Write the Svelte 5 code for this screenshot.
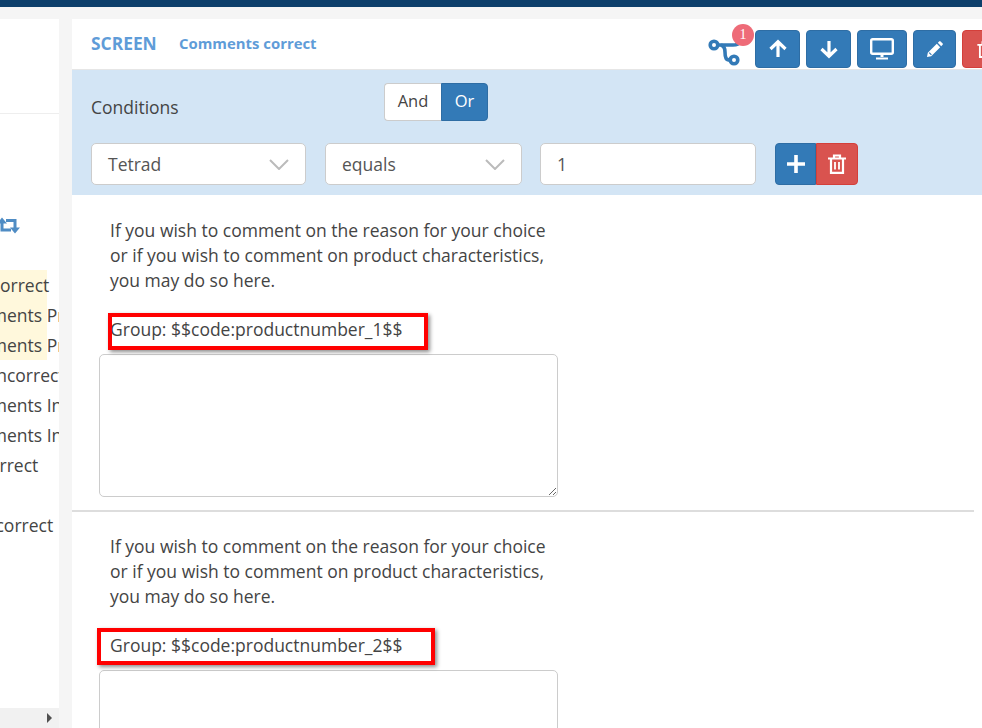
<script>
  const rows = [
    { text: 'Comments correct', shift: -102 },
    { text: 'Comments Product', shift: -47 },
    { text: 'Comments Product', shift: -47 },
    { text: 'Is incorrect', shift: -26 },
    { text: 'Comments Incorrect', shift: -47 },
    { text: 'Comments Incorrect', shift: -47 },
    { text: 'Correct', shift: -22 },
    { text: '', shift: 0 },
    { text: 'Not correct', shift: -39 }
  ];
  const questions = [
    { group: 'Group: $$code:productnumber_1$$', boxed: 'box_one' },
    { group: 'Group: $$code:productnumber_2$$', boxed: 'box_two' }
  ];
</script>

<div class="topbar"></div>
<div class="page">
  <aside class="tree">
    <div class="tree_head"></div>
    <div class="tree_tool">
      <svg width="21" height="18" viewBox="0 0 21 18">
        <path d="M2 4V13H11M6 3.500H15V12" fill="none" stroke="#4f8cc4" stroke-width="3"/>
        <path d="M10 10.500h10l-5 6zM-3 6.500h10l-5-6z" fill="#4f8cc4"/>
      </svg>
    </div>
    <div class="tree_list">
      <div class="tree_mark"></div>
      {#each rows as row}
        <div class="tree_row" style="margin-left: {row.shift}px">{row.text}</div>
      {/each}
    </div>
    <div class="tree_scroll">
      <span class="tree_arrow"></span>
    </div>
  </aside>

  <main class="main">
    <header class="head">
      <span class="head_kind">SCREEN</span>
      <span class="head_name">Comments correct</span>
      <div class="head_tools">
        <div class="flow">
          <svg width="36" height="30" viewBox="0 0 36 30" fill="none" stroke="#337ab7" stroke-width="3.600">
            <circle cx="7" cy="8" r="3.800"/>
            <circle cx="27" cy="23" r="3.800"/>
            <path d="M10.500 8H26c4 0 6-1 7-3"/>
            <path d="M14 8c3 1 4 3 4 7 0 6 1 8 5 8"/>
          </svg>
          <span class="flow_badge">1</span>
        </div>
        <button class="btn primary up" aria-label="up">
          <svg width="20" height="20" viewBox="0 0 20 20" fill="none" stroke="#fff" stroke-width="3.200">
            <path d="M10 18V3M2.500 10L10 2.800 17.500 10"/>
          </svg>
        </button>
        <button class="btn primary up" aria-label="down">
          <svg width="20" height="20" viewBox="0 0 20 20" fill="none" stroke="#fff" stroke-width="3.200">
            <path d="M10 2v15M2.500 10L10 17.200 17.500 10"/>
          </svg>
        </button>
        <button class="btn primary screen" aria-label="preview">
          <svg width="24" height="22" viewBox="0 0 24 22" fill="none" stroke="#fff">
            <rect x="1.200" y="1.200" width="21.600" height="14.600" rx="1.500" stroke-width="2.400"/>
            <path d="M12 16v3" stroke-width="3"/>
            <path d="M6 20.500h12" stroke-width="2"/>
          </svg>
        </button>
        <button class="btn primary edit" aria-label="edit">
          <svg width="16" height="16" viewBox="0 0 16 16" fill="#fff">
            <path d="M0 16l.8-4.200L9.800 2.800l3.400 3.400L4.200 15.200zM1.800 12l2.200 2.200.8-.8L2.600 11.200z" fill-rule="evenodd"/>
            <path d="M10.800 1.800l1.400-1.400a1 1 0 0 1 1.400 0l2 2a1 1 0 0 1 0 1.400l-1.400 1.400z"/>
          </svg>
        </button>
        <button class="btn danger head_trash" aria-label="delete">
          <svg width="18" height="17" viewBox="0 0 18 20" fill="none" stroke="#fff" stroke-width="2.200">
            <path d="M0 4.500h18M6 4.500V1.500h6v3M3 4.500v14.300h12V4.500"/>
            <path d="M7 8v7.500M11 8v7.500" stroke-width="1.800"/>
          </svg>
        </button>
      </div>
    </header>

    <section class="conditions">
      <div class="cond_top">
        <span class="cond_label">Conditions</span>
        <div class="toggle">
          <span class="toggle_and">And</span>
          <span class="toggle_or">Or</span>
        </div>
      </div>
      <div class="cond_row">
        <div class="select tetrad">
          <span>Tetrad</span>
          <svg width="20" height="11" viewBox="0 0 20 11" fill="none" stroke="#bbb" stroke-width="2"><path d="M1 1l9 9 9-9"/></svg>
        </div>
        <div class="select equals">
          <span>equals</span>
          <svg width="20" height="11" viewBox="0 0 20 11" fill="none" stroke="#bbb" stroke-width="2"><path d="M1 1l9 9 9-9"/></svg>
        </div>
        <input class="value" value="1" />
        <div class="cond_btns">
          <button class="btn primary cond_add" aria-label="add">
            <svg width="18" height="18" viewBox="0 0 18 18" fill="none" stroke="#fff" stroke-width="3.600"><path d="M9 0v18M0 9h18"/></svg>
          </button>
          <button class="btn danger cond_del" aria-label="remove">
            <svg width="18" height="20" viewBox="0 0 18 20" fill="none" stroke="#fff" stroke-width="2.200">
              <path d="M0 4.500h18M6 4.500V1.500h6v3M3 4.500v14.300h12V4.500"/>
              <path d="M7 8v7.500M11 8v7.500" stroke-width="1.800"/>
            </svg>
          </button>
        </div>
      </div>
    </section>

    {#each questions as q}
      <section class="question">
        <p class="question_text">If you wish to comment on the reason for your choice<br />or if you wish to comment on product characteristics,<br />you may do so here.</p>
        <div class="question_group">
          {q.group}
          <span class="callout {q.boxed}"></span>
        </div>
        <textarea class="answer"></textarea>
      </section>
    {/each}
  </main>
</div>

<style>
  :global(body) {
    margin: 0;
    background: #f5f5f5;
    overflow: hidden;
    font-family: "Open Sans", sans-serif;
    color: #444;
  }
  .topbar {
    height: 7px;
    background: #0d3f6b;
  }
  .page {
    display: flex;
    height: 709px;
    margin-top: 12px;
    gap: 13px;
    overflow: hidden;
  }

  .tree {
    width: 59px;
    flex: none;
    background: #fff;
    display: flex;
    flex-direction: column;
    overflow: hidden;
  }
  .tree_head {
    height: 94px;
    flex: none;
    border-bottom: 1px solid #eee;
  }
  .tree_tool {
    flex: none;
    height: 18px;
    margin-top: 103px;
  }
  .tree_tool svg {
    display: block;
  }
  .tree_list {
    position: relative;
    flex: 1;
    min-height: 0;
    padding-top: 35px;
    font-size: 17.500px;
    line-height: 30px;
    white-space: nowrap;
  }
  .tree_mark {
    position: absolute;
    left: 0;
    top: 35px;
    width: 47px;
    height: 90px;
    background: #fff8dc;
  }
  .tree_row {
    position: relative;
    height: 30px;
  }
  .tree_scroll {
    height: 20px;
    flex: none;
    background: #f1f1f1;
    display: flex;
    align-items: center;
    justify-content: flex-end;
    padding-right: 7px;
  }
  .tree_arrow {
    border-left: 5px solid #505050;
    border-top: 5px solid transparent;
    border-bottom: 5px solid transparent;
  }

  .main {
    flex: 1;
    min-width: 0;
    background: #fff;
    overflow: hidden;
  }
  .head {
    height: 51px;
    box-sizing: border-box;
    border-bottom: 1px solid #e6e6e6;
    padding: 0 0 3px 19px;
    display: flex;
    align-items: center;
    color: #5f9cd8;
    font-weight: 700;
    white-space: nowrap;
  }
  .head_kind {
    font-size: 17.400px;
    width: 88px;
  }
  .head_name {
    font-size: 14.900px;
  }
  .head_tools {
    margin-left: auto;
    align-self: flex-start;
    padding-top: 11px;
    display: flex;
    gap: 6px;
    margin-right: -25px;
  }
  .btn {
    height: 38px;
    border: 1px solid transparent;
    border-radius: 4px;
    padding: 0;
    display: flex;
    align-items: center;
    justify-content: center;
    flex: none;
  }
  .primary {
    background: #337ab7;
    border-color: #2e6da4;
  }
  .danger {
    background: #d9534f;
    border-color: #d43f3a;
  }
  .up { width: 45px; }
  .screen { width: 50px; }
  .edit { width: 43px; }
  .head_trash { width: 45px; }

  .flow {
    position: relative;
    width: 46px;
    height: 38px;
  }
  .flow svg {
    position: absolute;
    left: 4px;
    top: 7px;
  }
  .flow_badge {
    position: absolute;
    left: 29px;
    top: -6px;
    width: 22px;
    height: 22px;
    border-radius: 50%;
    background: #ee6b78;
    color: #fff;
    font-family: "Liberation Serif", serif;
    font-size: 14px;
    font-weight: 400;
    line-height: 22px;
    text-align: center;
  }

  .conditions {
    height: 125px;
    margin-bottom: 2px;
    box-sizing: border-box;
    background: #d3e5f5;
    padding: 13px 0 0 19px;
  }
  .cond_top {
    display: flex;
    height: 60px;
  }
  .cond_label {
    width: 293px;
    font-size: 17.500px;
    line-height: 23px;
    padding-top: 13px;
  }
  .toggle {
    display: flex;
    height: 38px;
    font-size: 16.500px;
    line-height: 34px;
  }
  .toggle_and {
    width: 57px;
    text-align: center;
    background: #fff;
    border: 1px solid #ccc;
    border-right: 0;
    border-radius: 4px 0 0 4px;
    box-sizing: border-box;
  }
  .toggle_or {
    width: 47px;
    text-align: center;
    background: #337ab7;
    border: 1px solid #2e6da4;
    border-radius: 0 4px 4px 0;
    color: #fff;
    box-sizing: border-box;
  }
  .cond_row {
    display: flex;
  }
  .select,
  .value {
    height: 42px;
    box-sizing: border-box;
    background: #fff;
    border: 1px solid #ccc;
    border-radius: 5px;
    font-family: inherit;
    font-size: 17.500px;
    color: #555;
  }
  .select {
    display: flex;
    align-items: center;
    justify-content: space-between;
    padding: 0 16px 0 16px;
  }
  .tetrad { width: 215px; margin-right: 19px; }
  .equals { width: 197px; margin-right: 18px; }
  .value {
    width: 216px;
    padding: 0 16px;
    margin-right: 19px;
    outline: none;
  }
  .cond_btns {
    display: flex;
  }
  .cond_add {
    width: 41px;
    height: 42px;
    border-radius: 4px 0 0 4px;
  }
  .cond_del {
    width: 42px;
    height: 42px;
    border-radius: 0 4px 4px 0;
  }

  .question {
    width: 902px;
    box-sizing: border-box;
    padding: 21px 0 13px 27px;
    border-bottom: 2px solid #ddd;
    font-size: 17.500px;
    line-height: 25px;
  }
  .question + .question {
    padding-top: 22px;
  }
  .question_text {
    margin: 0 0 0 11px;
  }
  .question_group {
    position: relative;
    margin: 24px 0 12px 11px;
    height: 25px;
  }
  .callout {
    position: absolute;
    box-sizing: border-box;
    border: 4px solid #f00;
    box-shadow: 2px 2px 4px rgba(0, 0, 0, 0.45);
  }
  .box_one {
    left: -2px;
    top: -4px;
    width: 320px;
    height: 37px;
  }
  .box_two {
    left: -13px;
    top: -5px;
    width: 338px;
    height: 37px;
  }
  .answer {
    display: block;
    width: 459px;
    height: 143px;
    box-sizing: border-box;
    margin-top: 0;
    border: 1px solid #ccc;
    border-radius: 5px;
    outline: none;
    resize: both;
  }
</style>
